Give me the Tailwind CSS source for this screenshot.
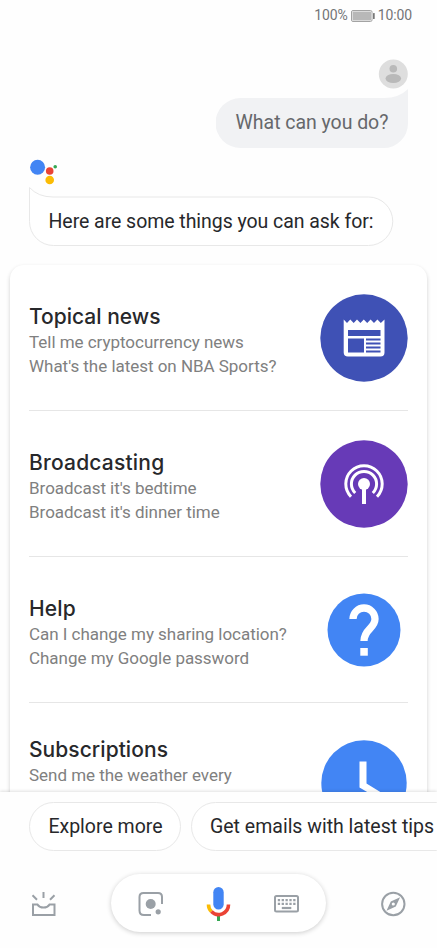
<!DOCTYPE html>
<html lang="en">
<head>
    <meta charset="UTF-8">
    <meta name="viewport" content="width=device-width, initial-scale=1.0">
    <title>Assistant</title>
    <script src="https://cdn.jsdelivr.net/npm/@tailwindcss/browser@4"></script>
</head>
<body class="bg-[#fefefe] font-['Roboto',sans-serif] text-[#27282b]">
    <div class="w-[437px] h-[948px] flex flex-col overflow-hidden">
        <!-- Conversation -->
        <main class="h-[792px] shrink-0 overflow-hidden">
            <div class="h-[31px] flex items-center justify-end pr-[25px] gap-[3px] text-[14px] tracking-[-0.1px] text-[#747577]">
                <span>100%</span>
                <svg class="w-6 h-3" viewBox="0 0 24 12">
                    <rect x=".5" y=".5" width="20.5" height="11" rx="1.5" fill="#fff" stroke="#a3a3a3"/>
                    <rect x="1.5" y="1.5" width="18.5" height="9" fill="#b8b8b8"/>
                    <rect x="22" y="3" width="1.7" height="6" rx=".5" fill="#777"/>
                </svg>
                <span>10:00</span>
            </div>

            <div class="pt-7 pr-[29px] flex flex-col items-end">
                <svg class="w-[30px] h-[30px]" viewBox="0 0 30 30">
                    <circle cx="15.300" cy="15" r="14.500" fill="#dedede"/>
                    <circle cx="15.300" cy="9.700" r="3.800" fill="#b9b9b9"/>
                    <ellipse cx="15.300" cy="19.500" rx="7.800" ry="4.500" fill="#b9b9b9"/>
                </svg>
                <div class="relative w-[192px] h-[59px] pt-[9px] flex items-center justify-center text-[19.5px] text-[#66686b]">
                    <svg class="absolute inset-0 w-full h-full" viewBox="0 0 192 59">
                        <path d="M24.500 9H168Q183 9 192 0V34.500A24.500 24.500 0 0 1 167.500 59H24.500A25 25 0 0 1 24.500 9Z" fill="#f1f2f4"/>
                    </svg>
                    <span class="relative whitespace-nowrap tracking-[-0.04px]">What can you do?</span>
                </div>
            </div>

            <div class="pl-[29px] pt-[11px]">
                <svg class="w-[30px] h-[28px]" viewBox="0 0 30 28">
                    <circle cx="8.600" cy="8.300" r="7.500" fill="#4285f4"/>
                    <circle cx="20.700" cy="12" r="3.800" fill="#ea4335"/>
                    <circle cx="20.700" cy="21" r="4.300" fill="#fbbc05"/>
                    <circle cx="26.200" cy="7.700" r="1.800" fill="#34a853"/>
                </svg>
                <div class="relative w-[365px] h-[60px] pt-[9px] pl-[19.5px] flex items-center text-[19.5px]">
                    <svg class="absolute inset-0 w-full h-full" viewBox="0 0 365 60">
                        <path d="M.5 .5Q9 10 24 10H339.500A24.250 24.250 0 0 1 339.500 58.500H24.500A24 24 0 0 1 .5 34.500Z" fill="#fff" stroke="#e8e8e8"/>
                    </svg>
                    <span class="relative whitespace-nowrap tracking-[-0.05px]">Here are some things you can ask for:</span>
                </div>
            </div>

            <section class="mt-[18px] mx-[10px] h-[640px] px-[19px] rounded-[14px] bg-white shadow-[0_2px_4px_rgba(0,0,0,0.18)]">
                <div class="h-[146px] pt-px flex items-center justify-between border-b border-[#e6e6e6]">
                    <div class="pt-[5px]">
                        <h2 class="font-['Inter',sans-serif] font-medium text-[21px] leading-[27px]">Topical news</h2>
                        <p class="text-[17px] leading-[24.3px] tracking-[-0.03px] text-[#808080]">Tell me cryptocurrency news<br>What's the latest on NBA Sports?</p>
                    </div>
                    <svg class="w-[88px] h-[88px]" viewBox="0 0 88 88">
                        <circle cx="44" cy="44" r="43.700" fill="#3f51b5"/>
                        <path d="M23.700 25.500L27 29L30.300 25.500L33.700 29L37 25.500L40.400 29L43.800 25.500L47.200 29L50.600 25.500L54 29L57.400 25.500L60.800 29L64.500 25.500V58.500Q64.500 62.500 60.500 62.500H28Q23.700 62.500 23.700 58.500Z" fill="#fff"/>
                        <path d="M28 36H60.500V42H28ZM28 44.500H44V58.500H28ZM46 44.500H60.500V46.500H46ZM46 48.500H60.500V50.500H46ZM46 52.500H60.500V54.500H46ZM46 56.500H60.500V58.500H46Z" fill="#3f51b5"/>
                    </svg>
                </div>
                <div class="h-[146px] pt-px flex items-center justify-between border-b border-[#e6e6e6]">
                    <div class="pt-[5px]">
                        <h2 class="font-['Inter',sans-serif] font-medium text-[21px] leading-[27px] tracking-[0.2px]">Broadcasting</h2>
                        <p class="text-[17px] leading-[24.3px] tracking-[-0.03px] text-[#808080]">Broadcast it's bedtime<br>Broadcast it's dinner time</p>
                    </div>
                    <svg class="w-[88px] h-[88px]" viewBox="0 0 88 88">
                        <circle cx="44" cy="44" r="43.700" fill="#673ab7"/>
                        <circle cx="44" cy="44" r="6" fill="#fff"/>
                        <path d="M44 46V64" stroke="#fff" stroke-width="4"/>
                        <path d="M35.200 53A12.600 12.600 0 1 1 52.800 53M31 56.700A18.200 18.200 0 1 1 57 56.700" fill="none" stroke="#fff" stroke-width="3"/>
                    </svg>
                </div>
                <div class="h-[146px] pt-px flex items-center justify-between border-b border-[#e6e6e6]">
                    <div class="pt-[5px]">
                        <h2 class="font-['Inter',sans-serif] font-medium text-[21px] leading-[27px] tracking-[0.2px]">Help</h2>
                        <p class="text-[17px] leading-[24.3px] tracking-[-0.03px] text-[#808080]">Can I change my sharing location?<br>Change my Google password</p>
                    </div>
                    <svg class="w-[88px] h-[88px]" viewBox="0 0 88 88">
                        <circle cx="44" cy="44" r="36.500" fill="#4285f4"/>
                        <path d="M33 33A11 11 0 0 1 55 33C55 42.500 44 43 44 55" fill="none" stroke="#fff" stroke-width="7.300"/>
                        <rect x="40.300" y="62" width="7.500" height="7.700" fill="#fff"/>
                    </svg>
                </div>
                <div class="pt-[33px] flex justify-between">
                    <div>
                        <h2 class="font-['Inter',sans-serif] font-medium text-[21px] leading-[27px] tracking-[0.05px]">Subscriptions</h2>
                        <p class="text-[17px] leading-[24.3px] tracking-[-0.03px] text-[#808080]">Send me the weather every</p>
                    </div>
                    <svg class="mt-1 w-[88px] h-[88px]" viewBox="0 0 88 88">
                        <circle cx="44" cy="43" r="42.700" fill="#4285f4"/>
                        <path d="M39.500 21.500H46.500V43.500L66 55.500L62.500 61L39.500 47.500Z" fill="#fff"/>
                    </svg>
                </div>
            </section>
        </main>

        <!-- Suggestions and input bar -->
        <footer class="relative flex-1 bg-[#fefefe] shadow-[0_-1px_3px_rgba(0,0,0,0.12)]">
            <div class="pl-[29px] pt-[10px] flex gap-[10px] text-[19.5px] whitespace-nowrap">
                <button class="shrink-0 w-[152px] h-[49px] pt-px pl-px rounded-full border border-[#e8e8e8] bg-white">Explore more</button>
                <button class="shrink-0 w-[270px] h-[49px] pt-px pl-[18px] text-left rounded-full border border-[#e8e8e8] bg-white">Get emails with latest tips</button>
            </div>
            <div class="pt-[23px] flex items-center">
                <svg class="ml-[31px] mt-[2px] w-[26px] h-[26px]" viewBox="0 0 26 26" fill="none" stroke="#9aa0a6" stroke-width="2">
                    <path d="M12.500 1V7M1.500 4.200L6 8.700M23.500 4.200L19 8.700"/>
                    <path d="M2 13.600H6.500Q8.500 16.600 12.500 16.600T18.500 13.600H23.500V24H2Z"/>
                </svg>
                <div class="ml-[54px] w-[215px] h-[58px] pt-[2px] px-[26px] flex items-center justify-between rounded-full bg-white shadow-[0_1px_5px_rgba(0,0,0,0.2)]">
                    <svg class="w-[26px] h-[26px]" viewBox="0 0 26 26">
                        <path d="M14 24H7Q2.500 24 2.500 19.500V6Q2.500 2 6.500 2H21Q25 2 25 6V13" fill="none" stroke="#9aa0a6" stroke-width="2"/>
                        <circle cx="13.700" cy="13" r="5" fill="#9aa0a6"/>
                        <circle cx="21.200" cy="20.800" r="2.600" fill="#9aa0a6"/>
                    </svg>
                    <svg class="w-[26px] h-[36px]" viewBox="0 0 26 36" fill="none" stroke-width="3.600">
                        <path d="M12.500 29V35" stroke="#34a853" stroke-width="3"/>
                        <path d="M2.500 18.500A10 10 0 0 0 5.400 25.600" stroke="#fbbc05"/>
                        <path d="M5.400 25.600A10 10 0 0 0 22.500 18.500" stroke="#ea4335"/>
                        <rect x="7.300" y="1" width="10.400" height="22.500" rx="5.200" fill="#4285f4"/>
                    </svg>
                    <svg class="w-[26px] h-[20px]" viewBox="0 0 26 20">
                        <rect x="1" y="2" width="23" height="15.500" rx="1.500" fill="none" stroke="#9aa0a6" stroke-width="2"/>
                        <path d="M3.800 6.200H21.500M3.800 9.900H21.500" stroke="#9aa0a6" stroke-width="2.300" stroke-dasharray="2.300 1.550"/>
                        <path d="M7.800 14H17.300" stroke="#9aa0a6" stroke-width="2.200"/>
                    </svg>
                </div>
                <svg class="ml-[54px] mt-[2px] w-[26px] h-[26px]" viewBox="0 0 26 26">
                    <circle cx="13.300" cy="13" r="11.200" fill="none" stroke="#9aa0a6" stroke-width="2"/>
                    <path d="M20.100 6.200L15.800 15.500L6.500 19.800L10.800 10.500ZM13.300 11.400A1.600 1.600 0 1 0 13.300 14.600A1.600 1.600 0 1 0 13.300 11.400Z" fill="#9aa0a6" fill-rule="evenodd"/>
                </svg>
            </div>
        </footer>
    </div>
</body>
</html>
